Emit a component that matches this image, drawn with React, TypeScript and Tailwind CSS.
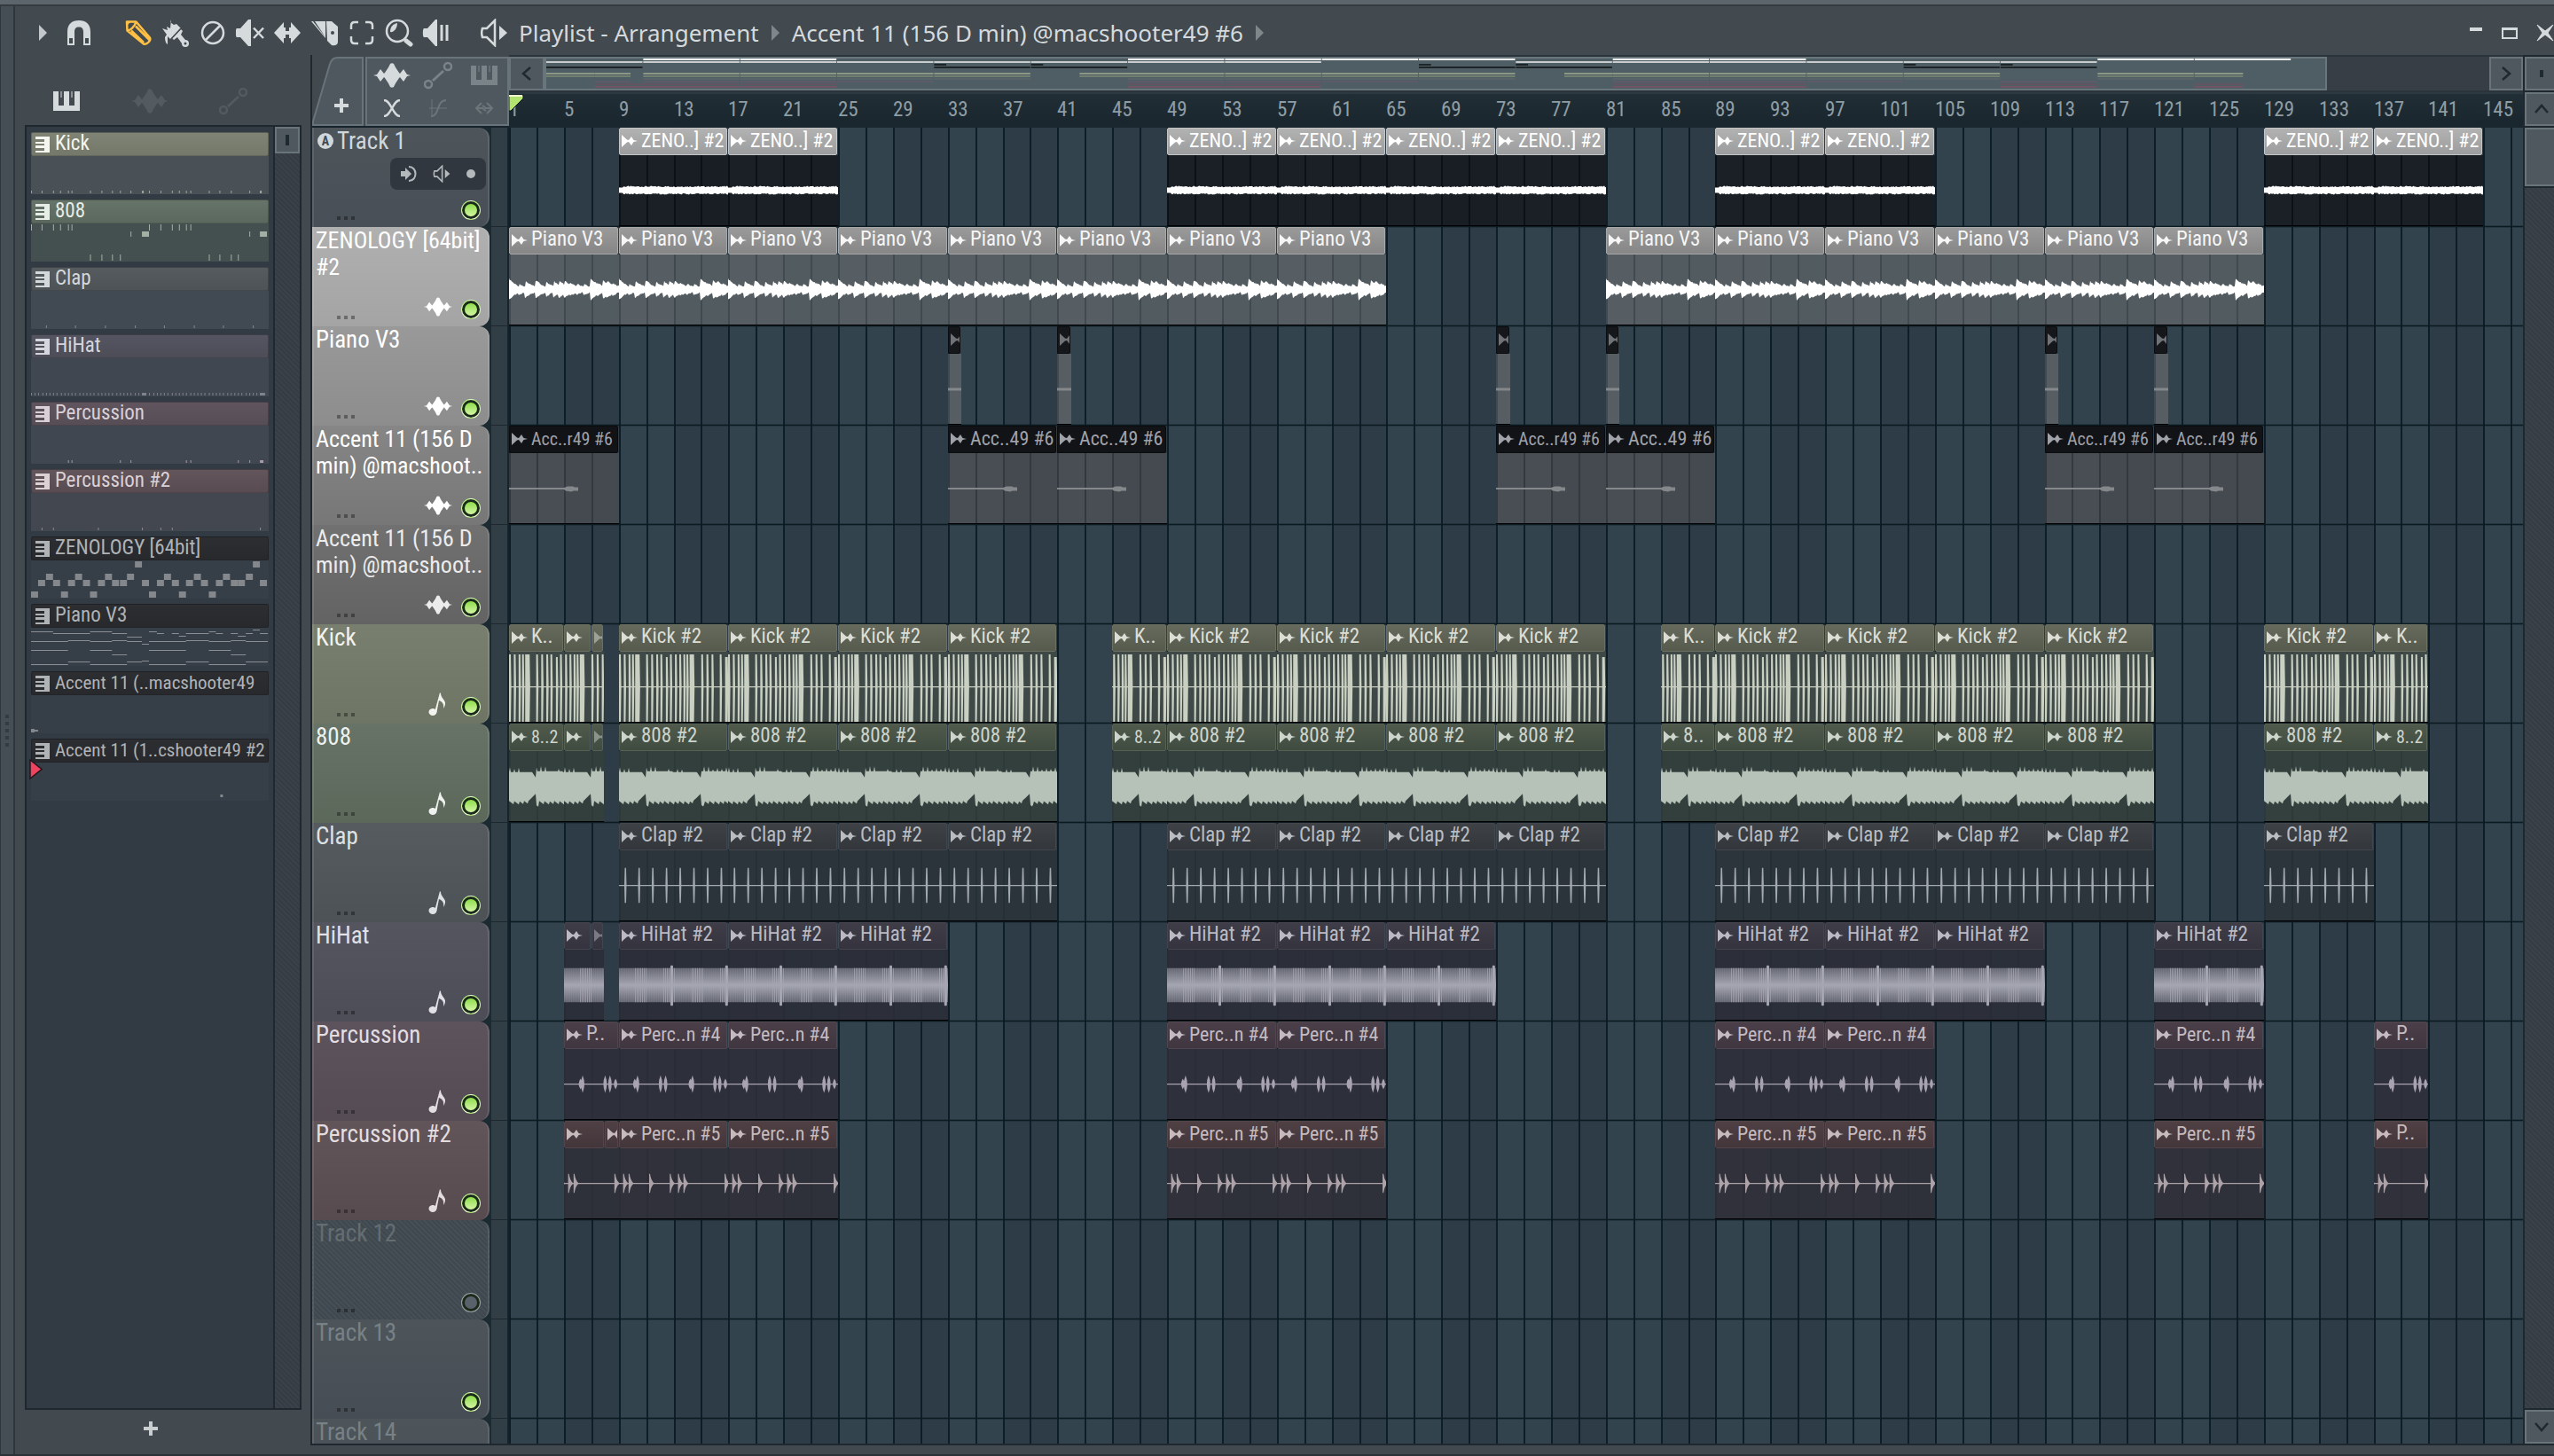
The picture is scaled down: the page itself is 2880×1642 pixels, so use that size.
import type { ReactNode } from 'react';
import { clsx } from 'clsx';

/* ---------- timeline maths ---------- */

const BAR = 15.46;
const BARS = 148;
const barX = (bar: number) => Math.round((bar - 1) * BAR);

// Small repeatable noise in the range 0..1
const noise = (n: number) => {
    const v = Math.sin(n * 12.9898) * 43758.5453;
    return v - Math.floor(v);
};

/* ---------- waveforms, drawn over one 8 bar cycle ---------- */

const CYCLE = Math.ceil(BAR * 8);
const MID = 40;

type Wave = 'noise' | 'keys' | 'tail' | 'stub' | 'kick' | 'bass' | 'clap' | 'hat' | 'lens' | 'pluck';

function mirrored(height: (x: number) => number) {
    const top: string[] = [];
    const bottom: string[] = [];
    for (let x = 0; x <= CYCLE; x += 1) {
        top.push(`${x},${(MID - height(x)).toFixed(1)}`);
        bottom.unshift(`${x},${(MID + height(x + 0.4)).toFixed(1)}`);
    }
    return `M${top.join('L')}L${bottom.join('L')}Z`;
}

const keyPeaks = [
    [0, 13], [0.8, 7], [1.25, 10], [2, 11], [2.75, 9], [3.3, 10], [3.7, 10], [4.1, 10], [4.5, 8], [5, 7], [5.5, 7],
    [6, 13], [6.5, 8], [6.9, 11], [7.2, 10], [7.6, 8],
];

const noisePath = mirrored((x) => (x < 5 ? 3 : 3.4 + noise(x) * 1.6));
const keysPath = mirrored((x) => {
    const level = keyPeaks.map(([bar, amp]) => {
        const d = x - bar * BAR;
        return d < -1 ? 0 : amp * Math.exp(-Math.max(d, 0) / 11);
    });
    return Math.max(2.5, Math.max(...level) - noise(x) * 1.5);
});

const kickHits = [
    [0, 2], [0.35, 2], [0.7, 2], [0.95, 2], [1.18, 5], [1.98, 2], [2.35, 2], [2.72, 2], [3.02, 2], [3.42, 2],
    [3.72, 2], [4.08, 2], [4.4, 2], [4.7, 2], [4.92, 2], [5.15, 5], [6, 2], [6.38, 2], [6.75, 2], [7.35, 2], [7.74, 3],
];
const kickPath = kickHits
    .map(([bar, w]) => {
        const x = bar * BAR;
        const top = bar === 3.42 || bar === 7.74 ? 6 : 3;
        return `M${x},${top}h${w}l0.600,${MID - top}l-0.600,${80 - MID}h-${w}l0,-${80 - MID}Z`;
    })
    .join('');

function buildBass() {
    const top: string[] = [];
    const bottom: string[] = [];
    for (let x = 0; x <= CYCLE; x += 1) {
        const inSection = (x + BAR * 2) % (BAR * 4);
        const left = BAR * 4 - inSection;
        const spike = x % 5 === 1 && noise(x) > 0.3 ? noise(x) * 6 : 0;
        const dip = left < 5 ? 5 - left : 0;
        const teeth = ((x * 3) % 17) / 4;
        const rise = left < 9 ? 9 - left : -teeth;
        top.push(`${x},${(23 - (left < 18 ? 0 : spike) + dip * 1.5 + (inSection > 30 ? 1 : 0)).toFixed(1)}`);
        bottom.unshift(`${x},${(57 - rise + (inSection < 3 ? 3 : 0)).toFixed(1)}`);
    }
    return `M${top.join('L')}L${bottom.join('L')}Z`;
}
const bassPath = buildBass();

const clapPath = [0, 1, 2, 3, 4, 5, 6, 7]
    .map((n) => {
        const x = (n + 0.42) * BAR;
        return `M${x},20h1.500l0.500,20l-0.500,20h-1.500l-0.500,-20Z`;
    })
    .join('');

const lensHits = [[1.15, 6], [1.35, 10], [3.03, 10], [3.4, 10], [5.2, 6], [5.36, 10], [7, 10], [7.35, 10], [7.76, 6]];
const lensPath = lensHits
    .map(([bar, h]) => `M${bar * BAR},${MID - h}q4,${h} 0,${h * 2}q-4,-${h} 0,-${h * 2}Z`)
    .join('');

const pluckPath = [0.3, 0.7, 2.2, 3.7, 4.3, 4.7, 7.7]
    .map((bar) => `M${bar * BAR},${MID - 11}h1q1,8 5,11q-4,3 -5,11h-1Z`)
    .join('');

function CenterLine() {
    return <path d={`M0,39.500h${CYCLE}v1.200h-${CYCLE}Z`} fill="currentColor" />;
}

function WaveDrawing({ wave }: { wave: Wave }) {
    switch (wave) {
        case 'noise':
            return <path d={noisePath} fill="currentColor" />;
        case 'keys':
            return <path d={keysPath} fill="currentColor" />;
        case 'tail':
            return <path d="M0,39.500h62l4,-1.500h6l2,1h4v4h-5l-3,1l-6,-1l-2,-1.500h-62Z" fill="currentColor" />;
        case 'stub':
            return <path d="M0,39h16v3h-16Z" fill="currentColor" />;
        case 'bass':
            return <path d={bassPath} fill="currentColor" />;
        case 'hat':
            return (
                <>
                    <rect x="0" y="21" width={CYCLE} height="39" fill="url(#hat-fill)" />
                    {Array.from({ length: 62 }, (_, i) => (
                        <rect
                            key={i}
                            x={i * 2}
                            y="21"
                            width="1"
                            height="39"
                            fill="currentColor"
                            opacity={i % 16 > 8 ? 0.75 : 0.15}
                        />
                    ))}
                    <rect x={3.75 * BAR} y="18" width="3" height="46" rx="1" fill="currentColor" />
                    <rect x={7.75 * BAR} y="18" width="3" height="46" rx="1" fill="currentColor" />
                </>
            );
        default: {
            const hits = { kick: kickPath, clap: clapPath, lens: lensPath, pluck: pluckPath }[wave];
            return (
                <>
                    <path d={hits} fill="currentColor" />
                    <CenterLine />
                </>
            );
        }
    }
}

/* ---------- data ---------- */

interface Clip {
    bar: number;
    length: number;
    label: string;
    offset?: number;
}

interface Track {
    name: string;
    header: string;
    kind?: 'audio' | 'note';
    muted?: boolean;
    first?: boolean;
    wave?: Wave;
    clipHead?: string;
    clipBody?: string;
    mini?: string;
    clips: Clip[];
}

const eights = (label: string, bars: number[]): Clip[] => bars.map((bar) => ({ bar, length: 8, label }));

const tracks: Track[] = [
    {
        name: 'Track 1',
        header: 'bg-linear-to-b from-[#4d555a] to-[#484f57] text-[#d0d7da]',
        first: true,
        wave: 'noise',
        clipHead: 'bg-linear-to-b from-[#b2b2b2] to-[#9c9d9e] border-[#c4c4c4] text-white',
        clipBody: 'bg-[#0a0a0c]/60 text-white',
        mini: '#eef0f0',
        clips: eights('ZENO..] #2', [9, 17, 49, 57, 65, 73, 89, 97, 129, 137]),
    },
    {
        name: 'ZENOLOGY [64bit] #2',
        header: 'bg-linear-to-b from-[#b0b0b0] to-[#a4a4a4] text-white',
        kind: 'audio',
        wave: 'keys',
        clipHead: 'bg-linear-to-b from-[#9a9a9a] to-[#868686] border-[#a8a8a8] text-[#f6f6f6]',
        clipBody: 'bg-[#808080]/45 text-white',
        mini: '#c9cccd',
        clips: eights('Piano V3', [1, 9, 17, 25, 33, 41, 49, 57, 81, 89, 97, 105, 113, 121]),
    },
    {
        name: 'Piano V3',
        header: 'bg-linear-to-b from-[#999999] to-[#8d8d8d] text-white',
        kind: 'audio',
        wave: 'stub',
        clipHead: 'bg-[#15171a] border-[#0c0d0f] text-[#6f7277]',
        clipBody: 'bg-[#808080]/45 text-[#85888b]',
        mini: '#1e2529',
        clips: [33, 41, 73, 81, 113, 121].map((bar) => ({ bar, length: 1, label: '' })),
    },
    {
        name: 'Accent 11 (156 D min) @macshoot..',
        header: 'bg-linear-to-b from-[#868686] to-[#777777] text-white',
        kind: 'audio',
        wave: 'tail',
        clipHead: 'bg-[#121316] border-[#0b0c0e] text-[#a0a2aa]',
        clipBody: 'bg-[#645c5d]/45 text-[#85888b]',
        mini: '#1e2529',
        clips: [
            { bar: 1, length: 8, label: 'Acc..r49 #6' },
            { bar: 33, length: 8, label: 'Acc..49 #6' },
            { bar: 41, length: 8, label: 'Acc..49 #6' },
            { bar: 73, length: 8, label: 'Acc..r49 #6' },
            { bar: 81, length: 8, label: 'Acc..49 #6' },
            { bar: 113, length: 8, label: 'Acc..r49 #6' },
            { bar: 121, length: 8, label: 'Acc..r49 #6' },
        ],
    },
    {
        name: 'Accent 11 (156 D min) @macshoot..',
        header: 'bg-linear-to-b from-[#717171] to-[#636363] text-[#ececec]',
        kind: 'audio',
        clips: [],
    },
    {
        name: 'Kick',
        header: 'bg-linear-to-b from-[#797f6f] to-[#6f7565] text-[#f2f3ee]',
        kind: 'note',
        wave: 'kick',
        clipHead: 'bg-linear-to-b from-[#666a5c] to-[#565b4e] border-[#6b6f60] text-[#dcded6]',
        clipBody: 'bg-[#424a48]/85 text-[#c9d0c2]',
        mini: '#8b9685',
        clips: [
            { bar: 1, length: 4, label: 'K..' },
            { bar: 5, length: 2, label: '', offset: 4 },
            { bar: 7, length: 0.95, label: '', offset: 6 },
            ...eights('Kick #2', [9, 17, 25, 33]),
            { bar: 45, length: 4, label: 'K..', offset: 4 },
            ...eights('Kick #2', [49, 57, 65, 73]),
            { bar: 85, length: 4, label: 'K..', offset: 4 },
            ...eights('Kick #2', [89, 97, 105, 113, 129]),
            { bar: 137, length: 4, label: 'K..' },
        ],
    },
    {
        name: '808',
        header: 'bg-linear-to-b from-[#667366] to-[#5b685a] text-[#eef1ee]',
        kind: 'note',
        wave: 'bass',
        clipHead: 'bg-linear-to-b from-[#4f5a4c] to-[#414c41] border-[#566153] text-[#cdd4cc]',
        clipBody: 'bg-[#343f3c]/85 text-[#b6c2b7]',
        mini: '#728071',
        clips: [
            { bar: 1, length: 4, label: '8..2' },
            { bar: 5, length: 2, label: '' },
            { bar: 7, length: 0.95, label: '', offset: 2 },
            ...eights('808 #2', [9, 17, 25, 33]),
            { bar: 45, length: 4, label: '8..2' },
            ...eights('808 #2', [49, 57, 65, 73]),
            { bar: 85, length: 4, label: '8..' },
            ...eights('808 #2', [89, 97, 105, 113, 129]),
            { bar: 137, length: 4, label: '8..2' },
        ],
    },
    {
        name: 'Clap',
        header: 'bg-linear-to-b from-[#565b60] to-[#4d5256] text-[#dfe2e4]',
        kind: 'note',
        wave: 'clap',
        clipHead: 'bg-linear-to-b from-[#3e4247] to-[#33373c] border-[#43474c] text-[#b9bdc2]',
        clipBody: 'bg-[#2a3238]/85 text-[#a3a9b0]',
        mini: '#586468',
        clips: eights('Clap #2', [9, 17, 25, 33, 49, 57, 65, 73, 89, 97, 105, 113, 129]),
    },
    {
        name: 'HiHat',
        header: 'bg-linear-to-b from-[#555560] to-[#4d4d58] text-[#e0e0e6]',
        kind: 'note',
        wave: 'hat',
        clipHead: 'bg-linear-to-b from-[#3f3d47] to-[#35343e] border-[#45434d] text-[#bbbac4]',
        clipBody: 'bg-[#2b2e39]/90 text-[#a5a6b2]',
        mini: '#5d5a69',
        clips: [
            { bar: 5, length: 2, label: '' },
            { bar: 7, length: 0.95, label: '' },
            ...eights('HiHat #2', [9, 17, 25, 49, 57, 65, 89, 97, 105, 121]),
        ],
    },
    {
        name: 'Percussion',
        header: 'bg-linear-to-b from-[#5d535c] to-[#544b55] text-[#e2dde1]',
        kind: 'note',
        wave: 'lens',
        clipHead: 'bg-linear-to-b from-[#4b4049] to-[#40363f] border-[#51454e] text-[#c3bac2]',
        clipBody: 'bg-[#2e2f3a]/90 text-[#a9a2b1]',
        mini: '#625463',
        clips: [
            { bar: 5, length: 4, label: 'P..', offset: 4 },
            ...eights('Perc..n #4', [9, 17, 49, 57, 89, 97, 121]),
            { bar: 137, length: 4, label: 'P..', offset: 4 },
        ],
    },
    {
        name: 'Percussion #2',
        header: 'bg-linear-to-b from-[#61555a] to-[#574b50] text-[#e4dddf]',
        kind: 'note',
        wave: 'pluck',
        clipHead: 'bg-linear-to-b from-[#4f4044] to-[#43363a] border-[#55454a] text-[#c6babd]',
        clipBody: 'bg-[#303039]/90 text-[#ada2a8]',
        mini: '#6f5463',
        clips: [
            { bar: 5, length: 3, label: '', offset: 4 },
            { bar: 8, length: 1, label: '', offset: 7 },
            ...eights('Perc..n #5', [9, 17, 49, 57, 89, 97, 121]),
            { bar: 137, length: 4, label: 'P..', offset: 4 },
        ],
    },
    {
        name: 'Track 12',
        header: 'bg-[repeating-linear-gradient(45deg,#3f484e_0px,#3f484e_2px,#464f55_2px,#464f55_4px)] text-[#646d72]',
        muted: true,
        clips: [],
    },
    { name: 'Track 13', header: 'bg-linear-to-b from-[#4d555a] to-[#464d55] text-[#788186]', clips: [] },
    { name: 'Track 14', header: 'bg-linear-to-b from-[#4d555a] to-[#464d55] text-[#788186]', clips: [] },
];

type Mark = [x: number, y: number, w: number, h: number];

interface Pattern {
    name: string;
    head: string;
    body: string;
    marks: Mark[];
}

const ticks = (xs: number[], y = 39, h = 3): Mark[] => xs.map((x) => [x, y, 1, h]);

const zenoLevels = [3, 2, 1, 2, 3, 2, 1, 2, 3, 2, 1, 2, 2, 1, 0, 2, 3, 2, 1, 2, 3, 2, 1, 2, 3, 2, 1, 2, 2, 1, 0, 2];
const zenoY = [1, 15, 22, 35];

// from, to, y
const pianoLines = [
    [0, 25, 4], [25, 67, 6], [67, 92, 4], [92, 109, 6], [109, 126, 10], [134, 143, 4], [143, 151, 6], [160, 168, 6],
    [168, 176, 9], [176, 202, 6], [202, 210, 4], [210, 218, 6], [227, 235, 6], [235, 244, 9], [244, 252, 6], [252, 260, 2],
    [260, 269, 6], [0, 42, 15], [42, 67, 14], [67, 92, 15], [92, 109, 14], [109, 126, 15], [126, 134, 18], [134, 176, 15],
    [176, 202, 14], [202, 227, 15], [227, 244, 14], [244, 269, 15], [0, 42, 25], [67, 92, 25], [92, 109, 30],
    [134, 176, 25], [202, 227, 25], [227, 244, 30], [0, 42, 41], [42, 67, 38], [67, 109, 41], [109, 126, 38],
    [126, 134, 37], [134, 176, 41], [176, 202, 38], [202, 244, 41], [244, 269, 38],
];

const patterns: Pattern[] = [
    {
        name: 'Kick',
        head: 'from-[#7f8475] to-[#73786a] text-[#f4f5ef]',
        body: 'bg-[#4a5156] text-[#9fa69c]',
        marks: [
            ...ticks([0, 12, 25, 33, 42, 46, 67, 80, 92, 101, 113, 134, 147, 160, 168, 176, 181, 202, 214, 227, 248]),
            [126, 39, 2, 3],
            [260, 39, 2, 3],
        ],
    },
    {
        name: '808',
        head: 'from-[#66746a] to-[#5a685d] text-[#e6ece6]',
        body: 'bg-[#444f4f] text-[#a3b0a5]',
        marks: [
            ...ticks([0, 12, 25, 33, 42, 46, 134, 147, 160, 168, 176, 181], 1, 7),
            ...ticks([113, 248], 9, 6),
            ...ticks([67, 80, 92, 101, 202, 214, 227, 235], 35, 7),
            [126, 9, 8, 6],
            [260, 9, 8, 6],
        ],
    },
    {
        name: 'Clap',
        head: 'from-[#565b60] to-[#4e5356] text-[#d3d8da]',
        body: 'bg-[#414a52] text-[#848b91]',
        marks: ticks([17, 50, 84, 118, 151, 185, 218, 252]),
    },
    {
        name: 'HiHat',
        head: 'from-[#555562] to-[#4d4d58] text-[#d5d5de]',
        body: 'bg-[#414750] text-[#7e828d]',
        marks: [
            ...ticks(Array.from({ length: 64 }, (_, i) => Math.round(i * 4.2))),
            [126, 39, 5, 3],
            [260, 39, 5, 3],
        ],
    },
    {
        name: 'Percussion',
        head: 'from-[#60555f] to-[#564d55] text-[#d8d0d6]',
        body: 'bg-[#414750] text-[#a69aa6]',
        marks: [...ticks([42, 46, 101, 113, 176, 181, 235, 248]), [260, 39, 4, 3]],
    },
    {
        name: 'Percussion #2',
        head: 'from-[#62555c] to-[#584c52] text-[#dbd1d5]',
        body: 'bg-[#434750] text-[#8d878e]',
        marks: ticks([12, 25, 76, 126, 147, 160, 260]),
    },
    {
        name: 'ZENOLOGY [64bit]',
        head: 'from-[#2c2e32] to-[#27292c] text-[#b0b3b6]',
        body: 'bg-[#363f47] text-[#84888c]',
        marks: zenoLevels.map((level, i) => [Math.round(i * 8.4), zenoY[level], 8, 7]),
    },
    {
        name: 'Piano V3',
        head: 'from-[#2c2e32] to-[#27292c] text-[#b0b3b6]',
        body: 'bg-[#363f47] text-[#8a8e92]',
        marks: pianoLines.map(([from, to, y]) => [from, y, to - from, 1]),
    },
    {
        name: 'Accent 11 (..macshooter49',
        head: 'from-[#2c2e32] to-[#27292c] text-[#b0b3b6]',
        body: 'bg-[#363f47] text-[#84888c]',
        marks: [[0, 38, 4, 4], [4, 39, 4, 2]],
    },
    {
        name: 'Accent 11 (1..cshooter49 #2',
        head: 'from-[#2c2e32] to-[#27292c] text-[#b0b3b6]',
        body: 'bg-[#363f47] text-[#84888c]',
        marks: [[215, 36, 3, 3]],
    },
];

/* ---------- icons ---------- */

function Svg({ className, box = '0 0 32 32', children }: { className?: string; box?: string; children: ReactNode }) {
    return (
        <svg viewBox={box} className={clsx('shrink-0', className)} fill="none" stroke="none" aria-hidden="true">
            {children}
        </svg>
    );
}

const MagnetIcon = () => (
    <Svg className="size-8">
        <path
            d="M3 30V15C3 6 8 2 16 2s13 4 13 13v15h-8V15c0-3.500-1.500-5.500-5-5.500S11 11.500 11 15v15Z"
            fill="currentColor"
        />
        <path d="M5 22h4v6H5ZM23 22h4v6h-4Z" fill="#42494f" />
    </Svg>
);

const PencilIcon = () => (
    <Svg className="size-8 text-[#ffc043]">
        <path
            d="M3 3.500h10.500L29 21.500c1.500 3-3 8-7 7L3.500 13.500ZM3.500 13.500c3 0 8-3.500 10-10M8 13.500 22 27M13 8.500 28.500 24"
            stroke="currentColor"
            strokeWidth="2.500"
            strokeLinejoin="round"
        />
        <path d="M3 3h5L3 8Z" fill="currentColor" />
    </Svg>
);

const BrushIcon = () => (
    <Svg className="size-8">
        <path
            d="M11 1 10 4 14 7l3-1 5 5-12 12-3-3v9c-2-1-3-4-3-8l2-3L1 11l6 2-1-4 4 2Z"
            fill="currentColor"
        />
        <path d="m12 22 10-10 2 2-2 4 5 6a4 4 0 1 1-4 4l-5-7-4 3Z" fill="currentColor" />
        <path d="m11 23 11-12" stroke="#42494f" strokeWidth="1.500" />
        <circle cx="27" cy="28" r="1.500" fill="#42494f" />
    </Svg>
);

const ForbidIcon = () => (
    <Svg className="size-8">
        <circle cx="16" cy="16" r="12" stroke="currentColor" strokeWidth="2.500" />
        <path d="M8 24 24 8" stroke="currentColor" strokeWidth="2.500" />
    </Svg>
);

const MuteIcon = () => (
    <Svg className="size-8">
        <path d="M1 11h4L14 1h3v30h-3L5 21H1c-1.500 0-1.500-10 0-10Z" fill="currentColor" />
        <path d="M20 10.500 31 22M31 10.500 20 22" stroke="currentColor" strokeWidth="2.500" />
    </Svg>
);

const SlipIcon = () => (
    <Svg className="size-8">
        <path d="M1 16 12 4v6h2v12h-2v6ZM31 16 20 4v6h-2v12h2v6Z" fill="currentColor" />
        <path d="M12 14h8v4h-8Z" fill="currentColor" />
    </Svg>
);

const SliceIcon = () => (
    <Svg className="size-8">
        <path d="M5 3h12v18ZM1 3h2l14 18v1Z" fill="currentColor" />
        <path d="M18 3h6l7 6v17c0 4-4 5-7 4l-5-5Z" fill="currentColor" />
        <circle cx="25" cy="16" r="2" fill="#42494f" />
    </Svg>
);

const SelectIcon = () => (
    <Svg className="size-8">
        <path
            d="M4 12V8c0-2.500 1.500-4 4-4h4M20 4h4c2.500 0 4 1.500 4 4v4M28 20v4c0 2.500-1.500 4-4 4h-4M12 28H8c-2.500 0-4-1.500-4-4v-4"
            stroke="currentColor"
            strokeWidth="2.500"
        />
    </Svg>
);

const ZoomIcon = () => (
    <Svg className="size-8">
        <circle cx="14" cy="14" r="12" stroke="currentColor" strokeWidth="2.500" />
        <path d="M14 5c-5 1-8 4-8 10 3 1 8-3 8-10Z" fill="currentColor" />
        <path d="m24 25 5 4" stroke="currentColor" strokeWidth="5" strokeLinecap="round" />
    </Svg>
);

const PlaybackIcon = () => (
    <Svg className="size-8">
        <path d="M2 11h4L15 1h2v30h-2L6 21H2c-1.500 0-1.500-10 0-10Z" fill="currentColor" />
        <path d="M22 7v18M28 7v18" stroke="currentColor" strokeWidth="3" />
    </Svg>
);

const SpeakerIcon = ({ className }: { className: string }) => (
    <Svg className={className}>
        <path d="M17 2v28L8 21H3c-1-3-1-7 0-10h5Z" stroke="currentColor" strokeWidth="2.500" />
        <path d="m22 8 9 8-9 8Z" fill="currentColor" />
    </Svg>
);

const WaveIcon = ({ className }: { className: string }) => (
    <Svg className={className} box="0 0 42 28">
        <path
            d="M0 14 4 13 8 7l4 5 1-1 4-6 2-4c1-1 3-1 4 0l2 4 4 6 1 1 4-5 4 6 4 1-4 1-4 6-4-5-1 1-4 6-2 4c-1 1-3 1-4 0l-2-4-4-6-1-1-4 5-4-6Z"
            fill="currentColor"
        />
    </Svg>
);

const AutomationIcon = ({ className }: { className: string }) => (
    <Svg className={className}>
        <circle cx="5" cy="26" r="4" stroke="currentColor" strokeWidth="2.500" />
        <circle cx="27" cy="6" r="4" stroke="currentColor" strokeWidth="2.500" />
        <path d="M10 22 22 11" stroke="currentColor" strokeWidth="3" />
    </Svg>
);

const PianoIcon = ({ className }: { className: string }) => (
    <Svg className={className} box="0 0 30 22">
        <path d="M0 0h6v16h6V0h6v16h6V0h6v22H0Z" fill="currentColor" />
        <path d="M9 0v7M21 0v7" stroke="currentColor" strokeWidth="1" />
    </Svg>
);

const PatternIcon = () => (
    <Svg className="h-4.5 w-4" box="0 0 16 18">
        <path d="M0 0h16v18H0v-2h10v-3H0v-3h10V8H0V6h10V3H0Z" fill="currentColor" />
    </Svg>
);

const ClipIcon = () => (
    <Svg className="h-3.5 w-[18px]" box="0 0 18 14">
        <path d="M0 0 6 5.500 8 6l3-4 2.500 4 4.500 1-4.500 1L11 12 8 8l-2 .5L0 14Z" fill="currentColor" />
    </Svg>
);

const PlusIcon = () => (
    <Svg className="size-4" box="0 0 16 16">
        <path d="M8 0v16M0 8h16" stroke="currentColor" strokeWidth="4" />
    </Svg>
);

const NoteIcon = () => (
    <Svg className="h-7 w-8" box="-5 0 32 28">
        <ellipse cx="5" cy="23" rx="4.500" ry="4" fill="currentColor" />
        <path d="M7 23 13 1l1 1c0 5 6 8 5 12-.5 3-1.500 4-2 5 1-6-2-8-5-9L9.500 23Z" fill="currentColor" />
    </Svg>
);

const Chevron = ({ turn }: { turn: string }) => (
    <Svg className={clsx('size-4', turn)} box="0 0 16 16">
        <path d="M12 1 4 8l8 7" stroke="#1f2930" strokeWidth="2.500" />
    </Svg>
);

/* ---------- shared controls ---------- */

const KEY = 'border-2 border-[#69737a] bg-[#4f575f]';
const LABEL_FONT = "font-['Roboto_Condensed','Roboto',sans-serif]";

function ScrollKey({ label, turn, className }: { label: string; turn: string; className: string }) {
    return (
        <button aria-label={label} className={clsx('flex shrink-0 items-center justify-center', KEY, className)}>
            <Chevron turn={turn} />
        </button>
    );
}

const tools = [
    { label: 'Draw', icon: <PencilIcon /> },
    { label: 'Paint', icon: <BrushIcon /> },
    { label: 'Delete', icon: <ForbidIcon /> },
    { label: 'Mute', icon: <MuteIcon /> },
    { label: 'Slip', icon: <SlipIcon /> },
    { label: 'Slice', icon: <SliceIcon /> },
    { label: 'Select', icon: <SelectIcon /> },
    { label: 'Zoom', icon: <ZoomIcon /> },
    { label: 'Playback', icon: <PlaybackIcon /> },
];

const Arrow = ({ className }: { className?: string }) => (
    <Svg className={clsx('h-[18px] w-[9px]', className)} box="0 0 9 18">
        <path d="M0 0 9 9 0 18Z" fill="currentColor" />
    </Svg>
);

function TitleBar() {
    return (
        <header className="flex h-[55px] shrink-0 items-center pt-1 text-[#d5dadd]">
            <button aria-label="Menu" className="ml-[27px] text-[#c2c8cb]">
                <Arrow />
            </button>
            <button aria-label="Snap" className="ml-5">
                <MagnetIcon />
            </button>
            <div className="ml-[30px] flex">
                {tools.map((tool) => (
                    <button key={tool.label} aria-label={tool.label} className="flex w-[42px] justify-center">
                        {tool.icon}
                    </button>
                ))}
            </div>
            <button aria-label="Playlist options" className="ml-7">
                <SpeakerIcon className="size-8" />
            </button>
            <h1 className="ml-3 flex items-center gap-3.5 font-['Noto_Sans',sans-serif] text-[26px] leading-8 whitespace-nowrap">
                Playlist - Arrangement
                <Arrow className="text-[#7f878b]" />
                <span>Accent 11 (156 D min) @macshooter49 #6</span>
                <Arrow className="text-[#7f878b]" />
            </h1>
            <div className="ml-auto flex items-center gap-5">
                <button aria-label="Minimize">
                    <Svg className="size-4" box="0 0 16 16">
                        <path d="M1 2h14v4H1Z" fill="currentColor" />
                    </Svg>
                </button>
                <button aria-label="Maximize">
                    <Svg className="h-4 w-5" box="0 0 20 16">
                        <path d="M2 3h16v11H2ZM1 4h18" stroke="currentColor" strokeWidth="2" />
                    </Svg>
                </button>
                <button aria-label="Close">
                    <Svg className="size-5" box="0 0 20 20">
                        <path d="m1 1 9 7 9-7-6 9 6 9-9-7-9 7 6-9Z" fill="currentColor" stroke="currentColor" />
                    </Svg>
                </button>
            </div>
        </header>
    );
}

/* ---------- picker ---------- */

function PatternItem({ pattern, selected }: { pattern: Pattern; selected: boolean }) {
    return (
        <li className="relative">
            <button
                className={clsx(
                    'flex h-[27px] w-full items-center gap-1.5 rounded-xs border border-black/20 bg-linear-to-b pl-1 whitespace-nowrap',
                    pattern.name.length > 20 ? 'text-[21px]' : 'text-[23px]',
                    pattern.head
                )}
            >
                <PatternIcon />
                {pattern.name}
            </button>
            <svg viewBox="0 0 270 43" className={clsx('h-[43px] w-full', pattern.body)} preserveAspectRatio="none">
                {pattern.marks.map(([x, y, w, h], i) => (
                    <rect key={i} x={x} y={y} width={w} height={h} fill="currentColor" />
                ))}
            </svg>
            {selected && (
                <svg viewBox="0 0 15 23" className="absolute top-[23px] -left-0.5 h-[23px] w-[15px]">
                    <path d="M1 1 14 11.500 1 22Z" fill="#ee4460" stroke="#23171d" strokeWidth="1.500" />
                </svg>
            )}
        </li>
    );
}

function Picker() {
    return (
        <aside className="flex w-[333px] shrink-0 flex-col pl-[11px]">
            <div className="grid h-[79px] w-[282px] grid-cols-3 items-center justify-items-center pt-6">
                <button aria-label="Patterns">
                    <PianoIcon className="h-[22px] w-[30px] text-[#d5dadd]" />
                </button>
                <button aria-label="Audio clips">
                    <WaveIcon className="h-7 w-[42px] text-[#535b60]" />
                </button>
                <button aria-label="Automation clips">
                    <AutomationIcon className="size-8 text-[#535b60]" />
                </button>
            </div>
            <div className="flex min-h-0 w-[312px] flex-1 border-2 border-[#1e282e] bg-[#323b44]">
                <ul className={clsx('flex flex-1 flex-col gap-1.5 overflow-hidden px-[5px] pt-1.5', LABEL_FONT)}>
                    {patterns.map((pattern, i) => (
                        <PatternItem key={pattern.name} pattern={pattern} selected={i === patterns.length - 1} />
                    ))}
                </ul>
                <div className="w-[30px] border-l-2 border-[#1e282e] bg-[repeating-linear-gradient(45deg,#353c43_0px,#353c43_2px,#3a4148_2px,#3a4148_4px)]">
                    <button
                        aria-label="Scroll patterns"
                        className={clsx('flex h-[30px] w-full items-center justify-center', KEY)}
                    >
                        <span className="h-3 w-1 bg-[#1f2930]" />
                    </button>
                </div>
            </div>
            <button aria-label="Add pattern" className="ml-[134px] flex h-[50px] w-4 items-center pb-2 text-[#c9ced1]">
                <PlusIcon />
            </button>
        </aside>
    );
}

/* ---------- track headers ---------- */

function TrackHeader({ track }: { track: Track }) {
    return (
        <li
            className={clsx(
                'flex h-28 shrink-0 flex-col overflow-hidden rounded-r-xl border-r-2 border-l-2 border-white/10 pr-2 pb-2',
                track.header
            )}
        >
            <h2
                className={clsx(
                    '-mr-2 mb-1 flex items-center gap-1 leading-[30px]',
                    track.name.length > 14 ? 'text-[26px]' : 'text-[27px]'
                )}
            >
                {track.first && (
                    <span className="ml-1 flex size-[18px] shrink-0 items-center justify-center rounded-full bg-[#d0d7da] text-sm font-bold text-[#42494f]">
                        A
                    </span>
                )}
                <span className={clsx(!track.first && 'pl-0.5')}>{track.name}</span>
            </h2>
            {track.first && (
                <div className="-mr-1.5 flex h-9 w-[108px] shrink-0 items-center justify-between self-end rounded-lg bg-[#31373e] px-3 text-[#b4b9bc]">
                    <button aria-label="Input">
                        <Svg className="size-[18px]" box="0 0 18 18">
                            <path d="M0 6h5V2l7 7-7 7v-4H0Z" fill="currentColor" />
                            <path d="M9 1c10 0 10 16 0 16" stroke="currentColor" strokeWidth="2" />
                        </Svg>
                    </button>
                    <button aria-label="Solo">
                        <SpeakerIcon className="size-5" />
                    </button>
                    <button aria-label="Record" className="size-2.5 rounded-full bg-current" />
                </div>
            )}
            <div className="mt-auto flex items-end justify-end gap-2.5">
                <span className="mr-auto ml-[26px] flex gap-1">
                    <i className="size-1 bg-black/35" />
                    <i className="size-1 bg-black/35" />
                    <i className="size-1 bg-black/35" />
                </span>
                {track.kind === 'audio' && <WaveIcon className="h-7 w-8" />}
                {track.kind === 'note' && <NoteIcon />}
                <button
                    aria-label={`Mute ${track.name}`}
                    className={clsx(
                        'size-[22px] rounded-full border border-white/40 ring-3 ring-[#1c2a1c] ring-inset',
                        track.muted ? 'bg-[#59626a]' : 'bg-linear-to-b from-[#7cd821] to-[#e2f9b4]'
                    )}
                />
            </div>
        </li>
    );
}

/* ---------- timeline ---------- */

function labelSize(label: string) {
    if (label.length > 10 || label === '8..2') return 'text-[20px]';
    return label.length > 8 ? 'text-[22px]' : 'text-[23px]';
}

function ClipView({ clip, track }: { clip: Clip; track: Track }) {
    const left = barX(clip.bar);
    const width = barX(clip.bar + clip.length) - left;
    const offset = (clip.offset ?? 0) * BAR;
    return (
        <div className="absolute inset-y-0 flex flex-col overflow-hidden border-b border-black" style={{ left, width }}>
            <div
                className={clsx(
                    'mr-px flex h-[31px] shrink-0 items-center gap-1 overflow-hidden rounded-xs border pb-0.5 pl-0.5 whitespace-nowrap',
                    labelSize(clip.label),
                    track.clipHead
                )}
            >
                <span className={clsx('flex', clip.length < 1 && 'opacity-50')}>
                    <ClipIcon />
                </span>
                {clip.label}
            </div>
            <svg
                viewBox={`${offset} 0 ${width} 80`}
                className={clsx('h-20 w-full', track.clipBody)}
                preserveAspectRatio="none"
            >
                {track.wave && <WaveDrawing wave={track.wave} />}
            </svg>
        </div>
    );
}

function Timeline() {
    return (
        <div className={clsx('relative min-w-0 flex-1 overflow-hidden bg-[#33434d]', LABEL_FONT)}>
            {Array.from({ length: BARS / 2 }, (_, i) => {
                const left = barX(i * 2 + 1);
                return (
                    <div
                        key={i}
                        className={clsx(
                            'absolute inset-y-0 border-l-2 border-[#0d1e28]',
                            i % 4 < 2 ? 'bg-[#33434d]' : 'bg-[#2d3c46]'
                        )}
                        style={{ left, width: barX(i * 2 + 3) - left }}
                    />
                );
            })}
            {tracks.map((track, i) => (
                <div
                    key={i}
                    className="relative h-28 border-b border-[#0c1a22] shadow-[inset_0_-1px_0_rgba(10,25,34,0.3),0_1px_0_rgba(10,25,34,0.3)]"
                >
                    {track.clips.map((clip) => (
                        <ClipView key={clip.bar} clip={clip} track={track} />
                    ))}
                </div>
            ))}
        </div>
    );
}

function Overview() {
    return (
        <div className="min-w-0 flex-1 bg-[#373e45]">
            <svg
                viewBox="0 0 1468 34"
                preserveAspectRatio="none"
                className="h-full w-11/12 border-2 border-[#69777c] bg-[#4f5e65]"
            >
                {tracks.map((track, row) =>
                    track.clips.map((clip) => (
                        <rect
                            key={`${row}-${clip.bar}`}
                            x={(clip.bar - 1) * 10}
                            y={row * 3 + (row > 4 ? 1 : 0)}
                            width={clip.length * 10 - (clip.length === 8 ? 0.6 : 0)}
                            height="2"
                            fill={track.mini}
                        />
                    ))
                )}
            </svg>
        </div>
    );
}

function Ruler() {
    return (
        <div className={clsx('relative h-[34px] overflow-hidden bg-linear-to-b from-[#212e36] to-[#1a262d]', LABEL_FONT)}>
            {Array.from({ length: 37 }, (_, i) => i * 4 + 1).map((bar) => (
                <span
                    key={bar}
                    className="absolute top-0.5 text-[23px] leading-8 text-[#8f9da4]"
                    style={{ left: barX(bar) }}
                >
                    {bar}
                </span>
            ))}
            <svg viewBox="0 0 17 20" className="absolute top-0 left-0 h-5 w-[17px]">
                <path d="M0 1h16v4L2 19H0Z" fill="#b2e36f" stroke="#10191e" />
                <path d="M0 2h15" stroke="#f0fbd2" strokeWidth="2" />
            </svg>
        </div>
    );
}

/* ---------- header block above the tracks ---------- */

function ModeBox() {
    return (
        <div className="flex h-20 shrink-0 gap-0.5 pt-0.5 text-[#d5dadd]">
            <button aria-label="Add track" className="relative h-[78px] w-[58px]">
                <svg viewBox="0 0 58 78" className="size-full" aria-hidden="true">
                    <path d="M1 77V73L20 8c2-5 4-7 9-7h28v76Z" fill="#4f585e" stroke="#69737a" strokeWidth="2" />
                    <path d="M33 47v16M25 55h16" stroke="currentColor" strokeWidth="4" />
                </svg>
            </button>
            <div className="grid flex-1 grid-cols-3 grid-rows-2 items-center justify-items-center border-2 border-[#69737a] bg-[#4f585e] pl-0.5">
                <button aria-label="Audio mode">
                    <WaveIcon className="h-7 w-[42px]" />
                </button>
                <button aria-label="Automation mode" className="text-[#7a8387]">
                    <AutomationIcon className="size-8" />
                </button>
                <button aria-label="Pattern mode" className="text-[#7a8387]">
                    <PianoIcon className="h-[22px] w-[30px]" />
                </button>
                <button aria-label="Crossfade">
                    <Svg className="size-5" box="0 0 20 20">
                        <path d="M1 1c8 0 10 18 18 18M19 1C11 1 9 19 1 19" stroke="currentColor" strokeWidth="2.500" />
                    </Svg>
                </button>
                <button aria-label="Curve" className="text-[#6c757a]">
                    <Svg className="size-5" box="0 0 20 20">
                        <path d="M0 10h20M3 0v20" stroke="currentColor" strokeWidth="1" />
                        <path d="M2 19c10 0 6-18 17-18" stroke="currentColor" strokeWidth="2" />
                    </Svg>
                </button>
                <button aria-label="Stretch" className="text-[#6c757a]">
                    <Svg className="h-4 w-5" box="0 0 20 16">
                        <path d="M7 2 1 8l6 6M13 2l6 6-6 6M1 8h7l4 3M19 8h-7L8 5" stroke="currentColor" strokeWidth="2" />
                    </Svg>
                </button>
            </div>
        </div>
    );
}

function Arrangement() {
    return (
        <main className="flex min-w-0 flex-1 flex-col pb-2.5">
            <div className="flex min-h-0 flex-1 border-b-2 border-[#1e282e]">
                <div className="flex w-[224px] shrink-0 flex-col border-l-2 border-[#1e282e]">
                    <ModeBox />
                    <div className="flex min-h-0 flex-1 overflow-hidden border-t-2 border-r-2 border-[#17242b] bg-[#1c2a32]">
                        <ul className={clsx('flex w-[200px] shrink-0 flex-col', LABEL_FONT)}>
                            {tracks.map((track, i) => (
                                <TrackHeader key={i} track={track} />
                            ))}
                        </ul>
                        <div className="ml-0.5 flex-1 bg-[repeating-linear-gradient(#323e45_0px,#323e45_111px,#1b2830_111px,#1b2830_112px)]" />
                    </div>
                </div>
                <div className="flex min-w-0 flex-1 flex-col">
                    <div className="flex h-[42px] shrink-0 border-y-2 border-[#2b343a]">
                        <ScrollKey label="Scroll left" turn="" className="w-10" />
                        <Overview />
                        <ScrollKey label="Scroll right" turn="rotate-180" className="w-[38px]" />
                    </div>
                    <div className="shrink-0 border-t-2 border-b-4 border-t-[#2c3940] border-b-[#1b272e]">
                        <Ruler />
                    </div>
                    <Timeline />
                </div>
                <div className="flex w-[35px] shrink-0 flex-col gap-0.5 overflow-hidden border-l-2 border-[#1e282e] bg-[#1e282e] pt-0.5">
                    <div className={clsx('flex h-[38px] w-[38px] shrink-0 items-center justify-center', KEY)}>
                        <span className="h-2 w-1 bg-[#1f2930]" />
                    </div>
                    <ScrollKey label="Scroll up" turn="rotate-90" className="h-[38px] w-[38px]" />
                    <button aria-label="Vertical scroll" className={clsx('h-[66px] w-[38px] shrink-0', KEY)} />
                    <div className="flex-1 bg-[repeating-linear-gradient(45deg,#353c43_0px,#353c43_2px,#3a4148_2px,#3a4148_4px)]" />
                    <ScrollKey label="Scroll down" turn="-rotate-90" className="h-[38px] w-[38px]" />
                </div>
            </div>
        </main>
    );
}

export default function App() {
    return (
        <div className="flex h-screen flex-col overflow-hidden border-b-2 border-[#2b3238] bg-[#42494f]">
            <svg width="0" height="0" className="absolute" aria-hidden="true">
                <linearGradient id="hat-fill" x1="0" y1="0" x2="0" y2="1">
                    <stop offset="0" stopColor="#a5a6b2" stopOpacity="0.45" />
                    <stop offset="0.5" stopColor="#a5a6b2" />
                    <stop offset="1" stopColor="#a5a6b2" stopOpacity="0.45" />
                </linearGradient>
            </svg>
            <div className="h-[7px] shrink-0 border-b-2 border-[#343b41] bg-[#5c646c]" />
            <div className="flex min-h-0 flex-1">
                <div className="flex w-[17px] shrink-0 flex-col items-center justify-center gap-1 border-r-2 border-l border-[#2f363c] bg-[#464e55]">
                    {[0, 1, 2, 3, 4].map((i) => (
                        <i key={i} className="size-1 bg-[#343b41]" />
                    ))}
                </div>
                <div className="flex min-w-0 flex-1 flex-col">
                    <TitleBar />
                    <div className="flex min-h-0 flex-1">
                        <Picker />
                        <Arrangement />
                    </div>
                </div>
            </div>
        </div>
    );
}
